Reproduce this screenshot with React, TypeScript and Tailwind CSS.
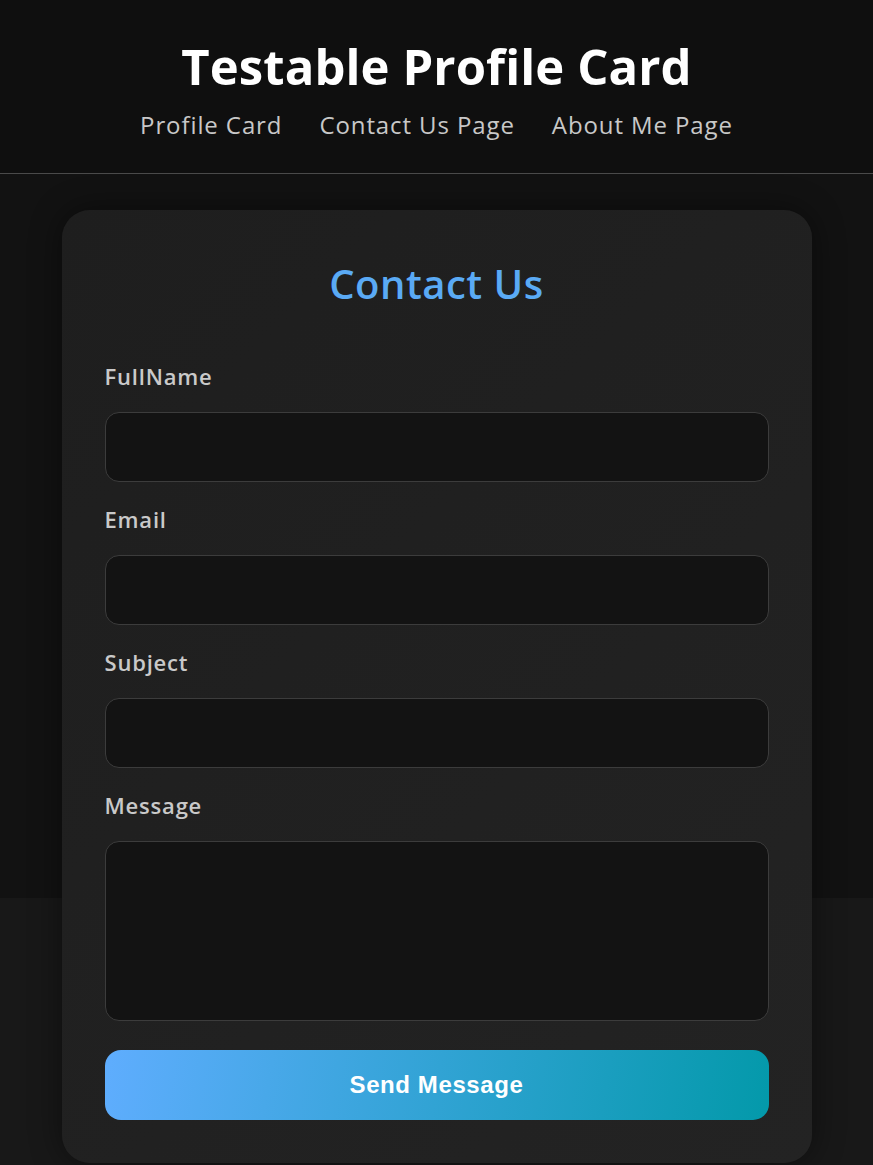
import React from 'react';

const fields = [
  { id: 'fullname', label: 'FullName', type: 'text' },
  { id: 'email', label: 'Email', type: 'email' },
  { id: 'subject', label: 'Subject', type: 'text' },
];

const font = { fontFamily: '"Open Sans", "Noto Sans", sans-serif' };

const App: React.FC = () => {
  return (
    <div className="min-h-screen bg-[#181818] text-white" style={font}>
      <header className="h-[174px] bg-[#0f0f0f] border-b border-[#4a4a4a] flex flex-col items-center pt-[34px]">
        <h1 className="text-[49px] leading-[64px] font-bold tracking-[0.1px] text-white">Testable Profile Card</h1>
        <nav className="mt-[10px] flex gap-[37px] text-[24px] leading-[34px] tracking-[0.9px] text-[#c8c8c8]">
          <a href="#">Profile Card</a>
          <a href="#">Contact Us Page</a>
          <a href="#">About Me Page</a>
        </nav>
      </header>

      <section className="h-[724px] bg-[#121212] pt-[36px] flex justify-center">
        <div className="w-[750px] h-[953px] shrink-0 rounded-[28px] bg-[linear-gradient(135deg,#1e1e1e,#232323)] shadow-[0_0_32px_rgba(0,0,0,0.45)] px-[43px] pt-[47px]">
          <h2 className="text-center text-[40px] leading-[54px] font-semibold tracking-[0.5px] text-[#5aaaf5]">Contact Us</h2>
          <form className="mt-[50px]" onSubmit={(e) => e.preventDefault()}>
            {fields.map((f) => (
              <div key={f.id} className="mb-[22px]">
                <label htmlFor={f.id} className="block h-[30px] leading-[30px] text-[22px] font-semibold tracking-[0.8px] text-[#c9c9c9]">
                  {f.label}
                </label>
                <input
                  id={f.id}
                  type={f.type}
                  className="mt-[21px] block w-full h-[70px] rounded-[14px] bg-[#131313] border border-[#3c3c3c] px-4 text-white outline-none"
                />
              </div>
            ))}
            <div className="mb-[29px]">
              <label htmlFor="message" className="block h-[30px] leading-[30px] text-[22px] font-semibold tracking-[0.8px] text-[#c9c9c9]">
                Message
              </label>
              <textarea
                id="message"
                className="mt-[21px] block w-full h-[180px] resize-none rounded-[14px] bg-[#131313] border border-[#3c3c3c] px-4 py-3 text-white outline-none"
              />
            </div>
            <button
              type="submit"
              className="block w-full h-[70px] rounded-[16px] bg-[linear-gradient(100deg,#5fadfe,#0399aa)] text-white text-[24px] font-bold tracking-[0.6px]"
              style={{ fontFamily: '"Liberation Sans", Arial, sans-serif' }}
            >
              Send Message
            </button>
          </form>
        </div>
      </section>
    </div>
  );
};

export default App;
